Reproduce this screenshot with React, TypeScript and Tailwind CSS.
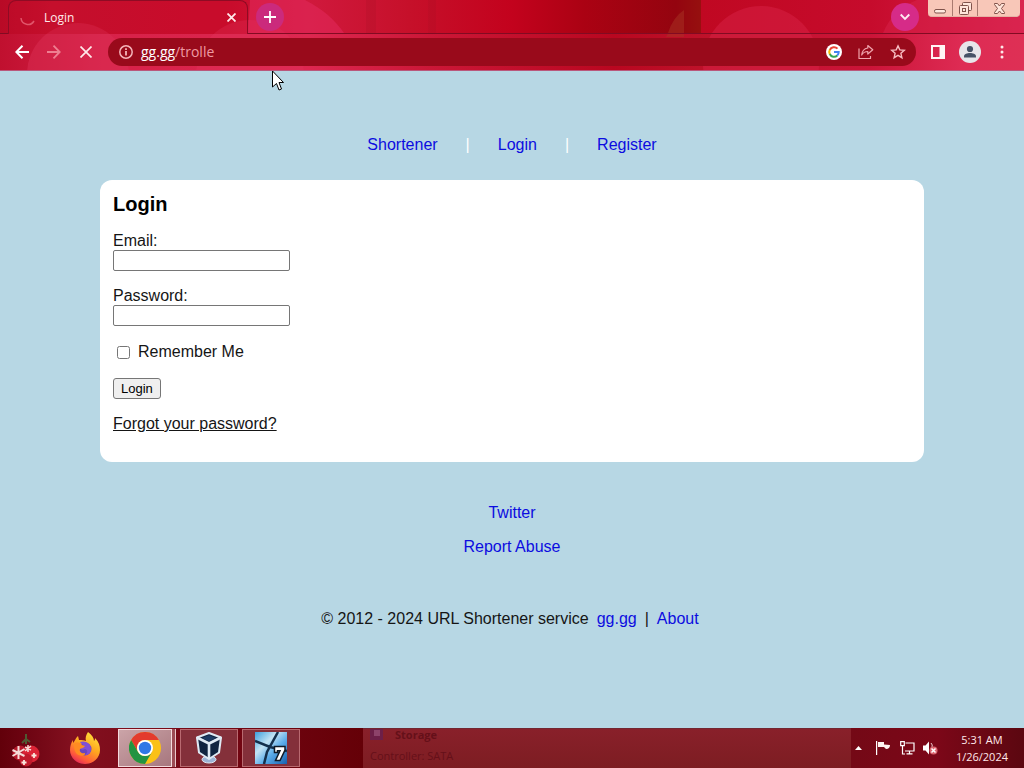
import React from "react";

const uiFont = "font-['Open_Sans','Noto_Sans',sans-serif]";

function HeaderArt() {
  return (
    <svg
      className="absolute inset-0 h-full w-full"
      viewBox="0 0 1024 71"
      preserveAspectRatio="none"
      aria-hidden="true"
    >
      <defs>
        <linearGradient id="sky" x1="0" x2="1" y1="0" y2="0">
          <stop offset="0" stopColor="#b80a26" />
          <stop offset="0.05" stopColor="#c4102c" />
          <stop offset="0.22" stopColor="#c90c2b" />
          <stop offset="0.3" stopColor="#d0193d" />
          <stop offset="0.4" stopColor="#c6102a" />
          <stop offset="0.5" stopColor="#c3021d" />
          <stop offset="0.57" stopColor="#ab0213" />
          <stop offset="0.66" stopColor="#94040f" />
          <stop offset="0.684" stopColor="#96100f" />
          <stop offset="0.685" stopColor="#c00822" />
          <stop offset="0.85" stopColor="#c60b2c" />
          <stop offset="1" stopColor="#d8224d" />
        </linearGradient>
        <linearGradient id="bar" x1="0" x2="1" y1="0" y2="0">
          <stop offset="0" stopColor="#c0102f" />
          <stop offset="0.1" stopColor="#d72148" />
          <stop offset="0.3" stopColor="#dd2750" />
          <stop offset="0.42" stopColor="#cb1737" />
          <stop offset="0.6" stopColor="#b90720" />
          <stop offset="0.68" stopColor="#bd1129" />
          <stop offset="0.85" stopColor="#cb1438" />
          <stop offset="0.94" stopColor="#de2b54" />
          <stop offset="1" stopColor="#de3055" />
        </linearGradient>
      </defs>
      <rect width="1024" height="71" fill="url(#sky)" />
      <rect y="34" width="1024" height="37" fill="url(#bar)" />
      <circle cx="78" cy="74" r="51" fill="#dc3156" opacity="0.45" />
      <circle cx="250" cy="74" r="54" fill="#e1325b" opacity="0.4" />
      <path d="M250 0h55c18 9 30 20 39 33h-96z" fill="#e1285a" opacity="0.6" />
      <path d="M366 0h10v33h-10zM428 0h8v33h-8z" fill="#a60d22" opacity="0.2" />
      <path d="M668 33q5-16 16-23v27h-18z" fill="#a83324" opacity="0.5" />
      <circle cx="761" cy="64" r="58" fill="#d82246" opacity="0.5" />
      <path d="M883 33q10-24 34-33h107v33z" fill="#dc2852" opacity="0.4" />
    </svg>
  );
}

function TabStrip() {
  return (
    <div className="relative flex h-[34px]">
      <div className="w-2 shrink-0 border-b border-[#820b22]" />
      <div className="flex w-60 shrink-0 items-center rounded-t-lg border-x border-t border-[#8f0b24] bg-[#c90c2d]/25 pr-[10px] pl-[11px]">
        <svg className="h-4 w-4" viewBox="0 0 16 16" fill="none" stroke="#e0556a" strokeWidth="1.5" aria-hidden="true">
          <path d="M1 8a7 7 0 0 0 13 3" />
        </svg>
        <span className="ml-2 flex-1 text-xs text-[#ffe9ea]">Login</span>
        <button aria-label="Close tab" className="flex h-3 w-3 items-center justify-center">
          <svg className="h-[9px] w-[9px]" viewBox="0 0 9 9" stroke="#ffe9ea" strokeWidth="1.8" aria-hidden="true">
            <path d="M.5 .5l8 8M8.5 .5l-8 8" />
          </svg>
        </button>
      </div>
      <div className="flex flex-1 items-start border-b border-[#820b22] pl-2">
        <button aria-label="New tab" className="mt-[3px] flex h-7 w-7 items-center justify-center rounded-full bg-[#cb2a7c]">
          <svg className="h-3 w-3" viewBox="0 0 12 12" stroke="#fff" strokeWidth="1.8" aria-hidden="true">
            <path d="M6 0v12M0 6h12" />
          </svg>
        </button>
        <div className="flex-1" />
        <button aria-label="Search tabs" className="mt-[3px] mr-[9px] flex h-7 w-7 items-center justify-center rounded-full bg-[#d62b88]">
          <svg className="h-[10px] w-[10px]" viewBox="0 0 10 10" fill="none" stroke="#ffe9f2" strokeWidth="1.9" aria-hidden="true">
            <path d="M0.7 2.500l4.300 4.300L9.300 2.500" />
          </svg>
        </button>
        <div className="mr-1 flex h-[17px] w-[92px] divide-x divide-[#a97a70] overflow-hidden rounded-b border-b border-[#e6b2a5] bg-[#f8c7b8]">
          <button aria-label="Minimize" className="flex w-[25px] items-center justify-center">
            <svg className="h-3 w-3" viewBox="0 0 12 12" fill="#ffe9df" stroke="#80534b" aria-hidden="true">
              <rect x="0.5" y="7.500" width="11" height="3.500" rx="1.500" />
            </svg>
          </button>
          <button aria-label="Restore" className="flex w-[25px] items-center justify-center">
            <svg className="h-[13px] w-[13px]" viewBox="0 0 13 13" fill="#ffe5da" stroke="#80534b" aria-hidden="true">
              <rect x="3.500" y="0.500" width="9" height="8" rx="1" />
              <rect x="0.500" y="3.500" width="9" height="9" rx="1" />
              <rect x="3.500" y="6.500" width="3" height="3" />
            </svg>
          </button>
          <button aria-label="Close" className="flex flex-1 items-center justify-center">
            <svg className="h-[11px] w-[13px]" viewBox="0 0 13 11" fill="#ffe5da" stroke="#80534b" aria-hidden="true">
              <path d="M1.500 .5h3l2 2.500 2-2.500h3v1L8.500 5.500l3 4v1h-3l-2-2.500-2 2.500h-3v-1l3-4-3-4z" />
            </svg>
          </button>
        </div>
      </div>
    </div>
  );
}

function Toolbar() {
  const nav = "flex h-8 w-8 shrink-0 items-center justify-center";
  return (
    <div className="relative flex h-[37px] items-center border-b border-[#b9587c] px-[6px]">
      <button aria-label="Back" className={nav}>
        <svg className="h-[14px] w-[14px]" viewBox="0 0 14 14" fill="none" stroke="#fff" strokeWidth="2" aria-hidden="true">
          <path d="M14 7H1.500M7.500 .7L1.300 7l6.200 6.300" />
        </svg>
      </button>
      <button aria-label="Forward" className={nav}>
        <svg className="h-[14px] w-[14px]" viewBox="0 0 14 14" fill="none" stroke="#ee7f91" strokeWidth="1.800" aria-hidden="true">
          <path d="M0 7h12.500M6.500 .7L12.700 7l-6.200 6.300" />
        </svg>
      </button>
      <button aria-label="Stop loading" className={nav}>
        <svg className="h-3 w-3" viewBox="0 0 12 12" stroke="#ffe9ea" strokeWidth="1.700" aria-hidden="true">
          <path d="M.5 .5l11 11M11.500 .5l-11 11" />
        </svg>
      </button>
      <div className="mr-[6px] ml-[6px] flex h-7 flex-1 items-center rounded-full bg-[#990a1b] pr-1 pl-[11px]">
        <svg className="h-[14px] w-[14px]" viewBox="0 0 14 14" fill="none" stroke="#f5b5ba" strokeWidth="1.500" aria-hidden="true">
          <circle cx="7" cy="7" r="6.200" />
          <path d="M7 6v4.500M7 3.300v1.600" strokeWidth="1.800" />
        </svg>
        <div className="ml-2 flex-1 text-sm leading-5 text-[#ee9aa3]">
          <span className="text-white">gg.gg</span>/trolle
        </div>
        <div className="flex gap-1">
          <button aria-label="Google" className="flex h-7 w-7 items-center justify-center">
            <svg className="h-4 w-4" viewBox="0 0 16 16" fill="none" strokeWidth="2" aria-hidden="true">
              <circle cx="8" cy="8" r="8" fill="#fff" />
              <path d="M11.500 4.600A4.700 4.700 0 0 0 3.800 6" stroke="#ea4335" />
              <path d="M3.800 5.800a4.700 4.700 0 0 0 0 4.400" stroke="#fbbc05" />
              <path d="M3.800 10a4.700 4.700 0 0 0 7.500 1.500" stroke="#34a853" />
              <path d="M11.200 11.600A4.700 4.700 0 0 0 12.700 8H8" stroke="#4285f4" />
            </svg>
          </button>
          <button aria-label="Share" className="flex h-7 w-7 items-center justify-center">
            <svg className="h-4 w-4" viewBox="0 0 16 16" fill="none" stroke="#f0a5ad" strokeWidth="1.200" strokeLinejoin="round" aria-hidden="true">
              <path d="M1 4.500v10h11.500V12M9.800 1.500l5 4.200-5 4.300V7.500C7 7.500 5 8.700 3.700 11c.3-3.800 2.400-6.400 6.100-7z" />
            </svg>
          </button>
          <button aria-label="Bookmark this tab" className="flex h-7 w-7 items-center justify-center">
            <svg className="h-4 w-4" viewBox="0 0 16 16" fill="none" stroke="#f7bcc1" strokeWidth="1.400" aria-hidden="true">
              <path d="M8 1.900l1.800 4 4.500.4-3.400 3 1 4.400L8 11.400l-3.900 2.300 1-4.400-3.400-3 4.500-.4z" />
            </svg>
          </button>
        </div>
      </div>
      <button aria-label="Side panel" className={nav}>
        <svg className="h-[14px] w-[14px]" viewBox="0 0 14 14" aria-hidden="true">
          <path d="M0 0h14v14H0zM2 2v10h6.500V2z" fill="#fff4f4" fillRule="evenodd" />
        </svg>
      </button>
      <button aria-label="Profile" className={nav}>
        <svg className="h-[22px] w-[22px]" viewBox="0 0 22 22" aria-hidden="true">
          <circle cx="11" cy="11" r="11" fill="#e7e5ea" />
          <circle cx="11" cy="8" r="3.100" fill="#475267" />
          <path d="M5 16.500v-1.300c0-2.200 3.300-3.200 6-3.200s6 1 6 3.200v1.300z" fill="#475267" />
        </svg>
      </button>
      <button aria-label="Menu" className={nav}>
        <svg className="h-[14px] w-1" viewBox="0 0 4 14" fill="#ffe9ea" aria-hidden="true">
          <circle cx="2" cy="2" r="1.500" />
          <circle cx="2" cy="7" r="1.500" />
          <circle cx="2" cy="12" r="1.500" />
        </svg>
      </button>
    </div>
  );
}

function Page() {
  const link = "text-[#0c0ce0]";
  const field = "h-[21px] w-[177px] rounded-xs border border-[#767676] bg-white px-[2px] text-[13px]";
  return (
    <main className="flex-1 bg-[#b7d7e4] px-[100px] pt-[65px] font-['Liberation_Sans',Arial,sans-serif] text-base leading-[18px] text-[#151515]">
      <nav className="flex justify-center gap-[28px]">
        <a href="#shortener" className={link}>Shortener</a>
        <span className="text-white">|</span>
        <a href="#login" className={link}>Login</a>
        <span className="text-white">|</span>
        <a href="#register" className={link}>Register</a>
      </nav>
      <form
        className="mt-[26px] flex flex-col items-start gap-4 rounded-xl bg-white px-[13px] pt-[13px] pb-[29px]"
        onSubmit={(e: React.FormEvent) => e.preventDefault()}
      >
        <h1 className="text-xl leading-[23px] font-bold text-black">Login</h1>
        <div className="flex flex-col">
          <label htmlFor="email">Email:</label>
          <input id="email" type="text" className={field} />
        </div>
        <div className="flex flex-col">
          <label htmlFor="password">Password:</label>
          <input id="password" type="password" className={field} />
        </div>
        <div className="flex h-5 items-center gap-2 pl-1">
          <input id="remember" type="checkbox" className="h-[13px] w-[13px]" />
          <label htmlFor="remember">Remember Me</label>
        </div>
        <button type="submit" className="h-[21px] rounded-[3px] border border-[#767676] bg-[#efefef] px-[7px] text-[13px] leading-[19px] text-black">
          Login
        </button>
        <a href="#forgot" className="underline">Forgot your password?</a>
      </form>
      <footer className="mt-[42px] flex flex-col items-center">
        <a href="#twitter" className={link}>Twitter</a>
        <a href="#abuse" className={`${link} mt-4`}>Report Abuse</a>
        <div className="mt-[54px] flex gap-2 pr-1">
          <span>© 2012 - 2024 URL Shortener service</span>
          <a href="#home" className={link}>gg.gg</a>
          <span>|</span>
          <a href="#about" className={link}>About</a>
        </div>
      </footer>
    </main>
  );
}

function OrnamentIcon() {
  return (
    <svg className="h-[34px] w-[30px]" viewBox="0 0 30 34" fill="none" aria-hidden="true">
      <path d="M15 11V1M15 6l-4 4M15 6l4 3" stroke="#4f5a32" strokeWidth="2" />
      <circle cx="9" cy="20" r="7.500" fill="#b5182a" />
      <circle cx="20" cy="21" r="8.500" fill="#dc2436" />
      <circle cx="15" cy="27" r="6.500" fill="#c01a2b" />
      <path d="M7.500 13v13M1.500 17l12 6M13.500 16l-12 7" stroke="#f5dcd8" strokeWidth="2" />
      <path d="M17 12v7M14 14l6 3M20 13l-6 5" stroke="#f6d9d4" strokeWidth="1.500" />
      <path d="M23 20v5M20.500 22.500h5M13 27v5M10.500 29.500h5" stroke="#f9e6dc" strokeWidth="1.800" />
    </svg>
  );
}

function FirefoxIcon() {
  return (
    <svg className="h-8 w-8" viewBox="0 0 32 32" aria-hidden="true">
      <defs>
        <linearGradient id="fox" x1="0.8" y1="0" x2="0.25" y2="1">
          <stop offset="0" stopColor="#ffe43d" />
          <stop offset="0.45" stopColor="#ffa51f" />
          <stop offset="0.8" stopColor="#ff5a3b" />
          <stop offset="1" stopColor="#e2235e" />
        </linearGradient>
      </defs>
      <path d="M19 0c4 3 6 6 6 9 1-1 1-2 1-3 4 4 5 8 5 12 0 8-7 14-15 14S1 26 1 18c0-4 1-7 3-10l0 3c2-2 2-4 5-7l1 4c3 0 5 0 7 1-1-3 0-6 2-9z" fill="url(#fox)" />
      <circle cx="16" cy="17" r="6.500" fill="#6945bd" />
      <path d="M11 10c5-2 11 1 11 7 0 4-3 6-6 6 3-2 3-5 0-6-2 1-4 1-5-1l4-2c-1-2-3-2-4-4z" fill="#8250d4" />
      <path d="M5 12c3-2 6-2 8 1l3 1c-1 2-4 2-5 3-1 3 2 5 5 4 1 3-6 4-9 0-2-3-2-6-2-9z" fill="#ff8b22" />
    </svg>
  );
}

function ChromeIcon() {
  return (
    <svg className="h-8 w-8" viewBox="0 0 32 32" aria-hidden="true">
      <circle cx="16" cy="16" r="16" fill="#fbc116" />
      <path d="M2.140 8A16 16 0 0 1 29.860 8H16a8 8 0 0 0-6.930 12z" fill="#e33b2e" />
      <path d="M2.140 8A16 16 0 0 0 16 32l6.930-12A8 8 0 0 1 9.070 20z" fill="#229342" />
      <circle cx="16" cy="16" r="8" fill="#fff" />
      <circle cx="16" cy="16" r="6.200" fill="#2f78e5" />
    </svg>
  );
}

function CubeIcon() {
  return (
    <svg className="h-8 w-[26px]" viewBox="0 0 26 32" strokeLinejoin="round" aria-hidden="true">
      <ellipse cx="13" cy="27.500" rx="7" ry="3.500" fill="#9db4d6" stroke="#e1e9f4" />
      <path d="M13 1L1 5.500l2 15L13 27l10-6.500 2-15z" fill="#102440" stroke="#dfeaf4" strokeWidth="2" />
      <path d="M1 5.500l12 6 12-6M13 11.500V27" fill="none" stroke="#dfeaf4" strokeWidth="2.600" />
      <path d="M13 3.200L6 6l7 3.300L20 6z" fill="#1c3b63" />
    </svg>
  );
}

function SevenIcon() {
  return (
    <svg className="h-8 w-8" viewBox="0 0 32 32" aria-hidden="true">
      <defs>
        <linearGradient id="glass" x1="0" x2="1" y1="0" y2="1">
          <stop offset="0" stopColor="#3d9fdc" />
          <stop offset="0.35" stopColor="#c3e3f4" />
          <stop offset="0.6" stopColor="#5cadea" />
          <stop offset="1" stopColor="#165fae" />
        </linearGradient>
      </defs>
      <rect width="32" height="32" fill="url(#glass)" />
      <path d="M23 0L12 20 9 32M0 9l15 6 17 4" fill="none" stroke="#14304d" strokeWidth="2.500" />
      <path d="M19.500 14.500H30V18l-5 10.500h-4.500L25 18.700h-2.500v1.800h-3z" fill="#fff" stroke="#101a26" strokeWidth="1.500" />
    </svg>
  );
}

function Taskbar() {
  const task = "flex h-[38px] w-[58px] items-center justify-center border border-[#b96a70] bg-[#84303a]";
  return (
    <footer className={`flex h-10 shrink-0 bg-[#720713] text-white ${uiFont}`}>
      <div className="flex w-[363px] shrink-0 items-center gap-1 bg-linear-to-r from-[#62000a] via-[#83101f] via-20% to-[#650007]">
        <button aria-label="Start" className="flex h-10 w-[52px] items-center justify-center pt-1">
          <OrnamentIcon />
        </button>
        <button aria-label="Firefox" className="flex h-10 w-[58px] items-center justify-center">
          <FirefoxIcon />
        </button>
        <button aria-label="Chrome" className="flex h-[38px] w-[58px] border-r border-[#e9c6c9] bg-[#9c4b54] pr-[3px]">
          <span className="flex h-full flex-1 items-center justify-center border border-[#f4dadd] bg-linear-to-br from-[#cba4a8] to-[#a7777e]">
            <ChromeIcon />
          </span>
        </button>
        <button aria-label="VirtualBox" className={task}>
          <CubeIcon />
        </button>
        <button aria-label="Windows 7" className={task}>
          <SevenIcon />
        </button>
      </div>
      <div className="flex flex-1 flex-col overflow-hidden border-t border-[#722630] bg-linear-to-b from-[#89202a] to-[#7d1d22] pl-[7px] text-[11px] text-[#651019]">
        <div className="flex h-[11px] items-center gap-3">
          <svg className="h-[11px] w-[13px]" viewBox="0 0 13 11" aria-hidden="true">
            <rect width="13" height="11" fill="#6d1f48" />
            <rect x="4" y="1" width="6" height="6" fill="#8d426a" />
          </svg>
          <span className="leading-[11px] font-bold">Storage</span>
        </div>
        <span className="mt-2 leading-4">Controller: SATA</span>
      </div>
      <div className="flex items-center bg-linear-to-r from-[#740916] via-[#7c0718] to-[#5b0710] pr-4">
        <button aria-label="Show hidden icons" className="flex w-4 justify-center">
          <svg className="h-1 w-[7px]" viewBox="0 0 7 4" fill="#fff" aria-hidden="true">
            <path d="M0 4l3.500-4L7 4z" />
          </svg>
        </button>
        <svg className="ml-[9px] h-[14px] w-[15px]" viewBox="0 0 15 14" aria-hidden="true">
          <path d="M.6 0v14" stroke="#fff" strokeWidth="1.200" />
          <path d="M2 1h6v2.500l6 .5c0 2-1 4-4 4l-2-2H2z" fill="#fff4f0" />
        </svg>
        <svg className="ml-[9px] h-[14px] w-[15px]" viewBox="0 0 15 14" fill="none" stroke="#fff" strokeWidth="1.200" aria-hidden="true">
          <path d="M5.500 2H14v8H5M9.500 10v2.500M6.500 12.900h6M2.500 5v8H5M.7.7h3.600v4H.7z" />
        </svg>
        <svg className="ml-2 h-[14px] w-[15px]" viewBox="0 0 15 14" aria-hidden="true">
          <path d="M0 4.500h2.500L6 .5v13L2.500 9.500H0z" fill="#fff" />
          <path d="M8 2q2 2 1 4" fill="none" stroke="#f1ced0" />
          <circle cx="10.500" cy="9.500" r="4" fill="#dc6570" />
          <path d="M8.500 7.500l4 4M12.500 7.500l-4 4" stroke="#fff" strokeWidth="1.500" />
        </svg>
        <div className="ml-[18px] text-center text-[11px] leading-[17px] text-[#ffe9ea]">
          <div>5:31 AM</div>
          <div>1/26/2024</div>
        </div>
      </div>
    </footer>
  );
}

export default function App() {
  return (
    <div className="relative flex min-h-screen flex-col">
      <header className={`relative ${uiFont}`}>
        <HeaderArt />
        <TabStrip />
        <Toolbar />
      </header>
      <Page />
      <Taskbar />
      <svg className="pointer-events-none absolute top-[70px] left-[272px] h-[21px] w-3" viewBox="0 0 12 21" fill="#fff" stroke="#000" aria-hidden="true">
        <path d="M.5 1v16l4-3.500 2.500 6.500 2.500-1L7 12.500h4.500z" />
      </svg>
    </div>
  );
}
